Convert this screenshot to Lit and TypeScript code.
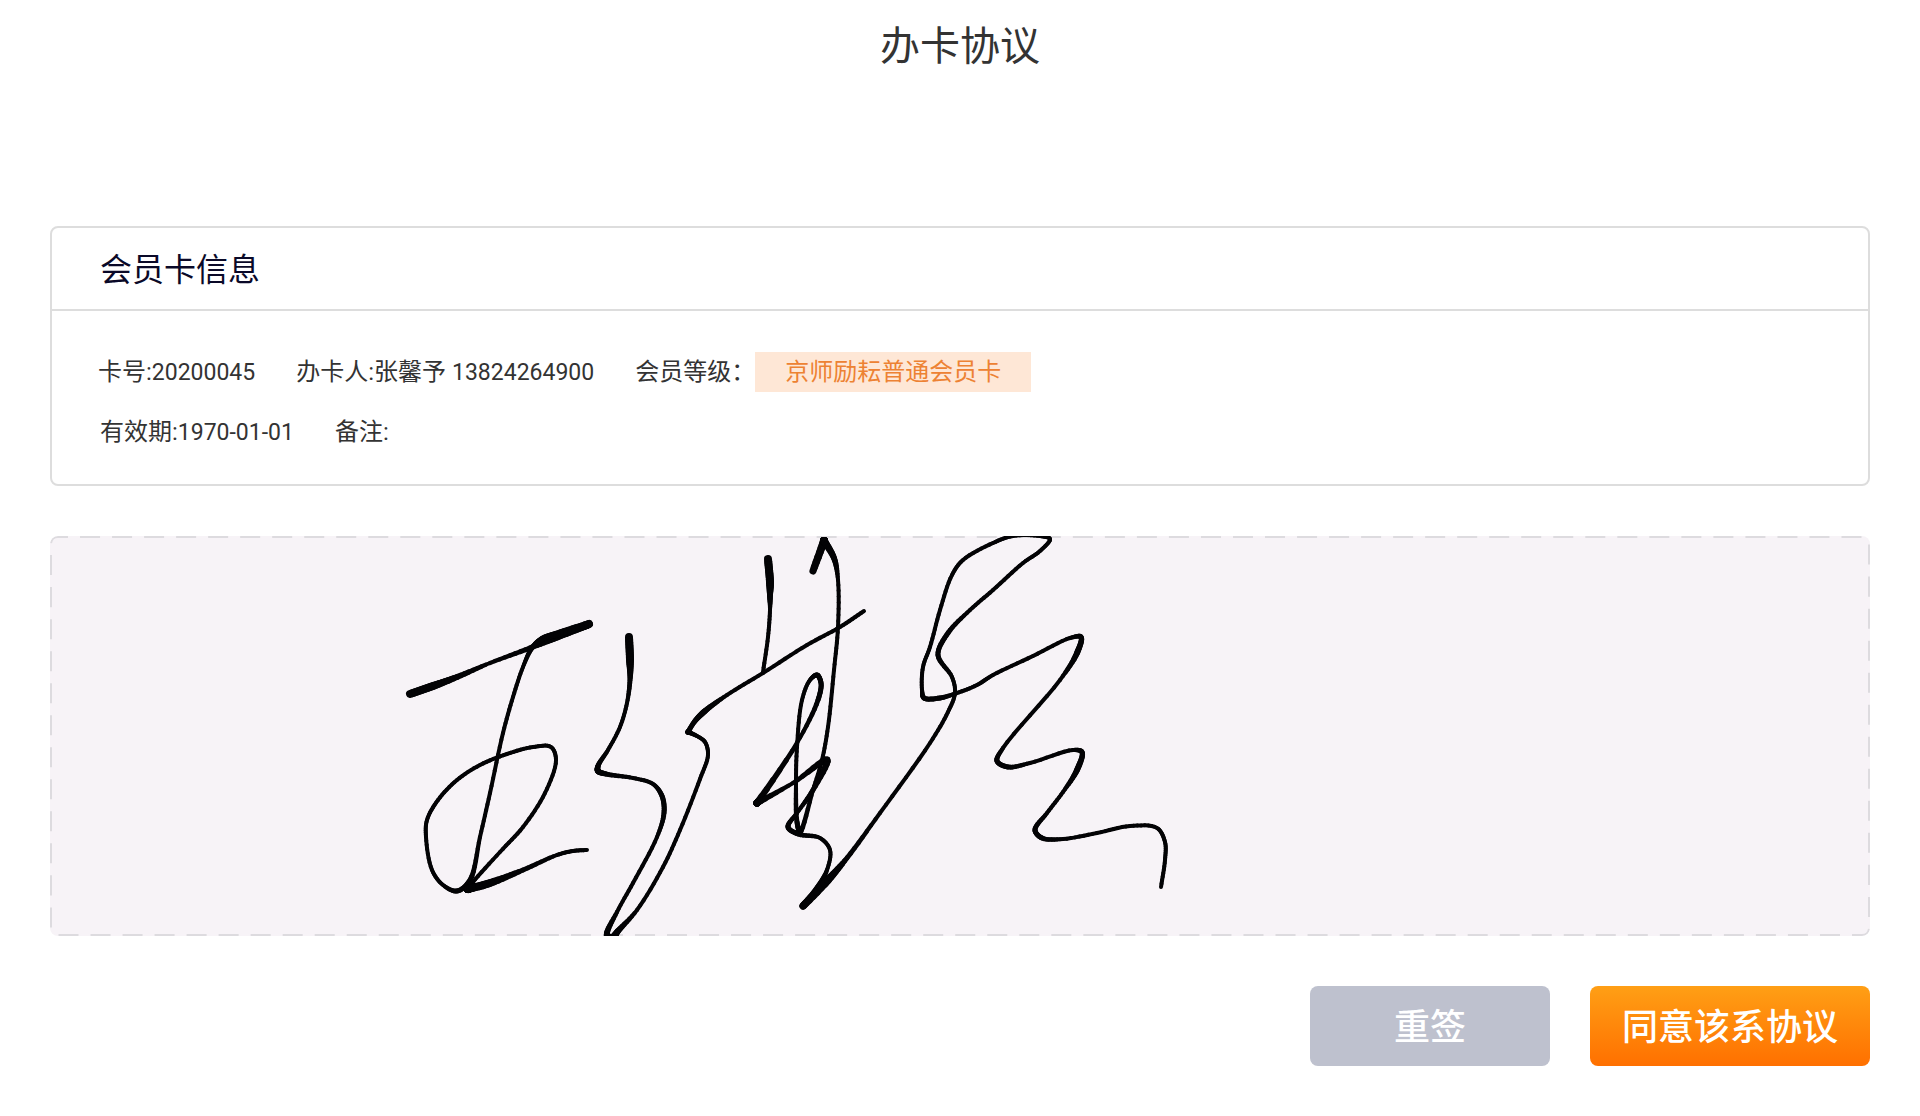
import { LitElement, html, css, svg } from "lit";
import { customElement } from "lit/decorators.js";

type InkPoint = [x: number, y: number, width: number];

/* Pen samples: x, y and nib width. A repeated sample makes a sharp turn. */
const STROKES: InkPoint[][] = [
  [
    [410, 694, 8], [433, 686, 8], [457, 677, 6], [490, 663, 4], [530, 648, 5],
    [557, 637, 7], [580, 628, 7], [589, 624, 8],
  ],
  [
    [589, 624, 8], [557, 634, 7], [542, 639, 6], [532, 648, 5], [523, 667, 4],
    [513, 697, 4], [503, 733, 4], [490, 793, 4], [480, 837, 4], [470, 880, 5],
    [457, 891, 5], [443, 885, 4], [432, 870, 4], [426, 837, 4], [427, 820, 4],
    [438, 800, 4], [457, 780, 4], [480, 765, 4], [507, 754, 4], [533, 747, 4],
    [551, 747, 4], [556, 760, 4], [545, 793, 4], [523, 827, 4], [500, 852, 4],
    [473, 882, 4], [468, 889, 8], [468, 889, 8], [490, 883, 8], [523, 870, 5],
    [557, 855, 4], [573, 851, 4], [587, 850, 4],
  ],
  [
    [629, 637, 8], [630, 660, 8], [630, 680, 5], [627, 703, 4], [620, 727, 4],
    [608, 750, 4], [598, 766, 5], [598, 771, 6], [606, 774, 5], [633, 778, 4],
    [653, 784, 4], [662, 796, 5], [664, 813, 5], [657, 837, 4], [633, 883, 4],
    [617, 912, 4], [607, 935, 6], [612, 938, 8], [618, 931, 6], [637, 910, 4],
    [663, 867, 4], [680, 830, 4], [700, 779, 4], [708, 755, 4], [705, 742, 4],
    [697, 736, 4], [688, 732, 5], [688, 732, 5], [695, 721, 5], [705, 711, 6],
    [727, 695, 4], [763, 673, 4], [807, 645, 4], [840, 627, 4], [864, 611, 4],
  ],
  [
    [768, 559, 8], [770, 582, 8], [770, 595, 6], [770, 610, 4], [768, 637, 4],
    [763, 672, 4],
  ],
  [
    [813, 571, 7], [824, 541, 8], [824, 541, 8], [834, 558, 6], [838, 580, 4],
    [838, 627, 4], [834, 670, 4], [828, 727, 4], [822, 760, 4], [813, 790, 4],
    [800, 832, 5], [797, 822, 5], [796, 783, 4], [797, 747, 4], [802, 700, 4],
    [810, 680, 4], [817, 675, 5], [821, 683, 5], [818, 700, 5], [797, 743, 4],
    [757, 803, 7], [757, 803, 7], [793, 783, 4], [827, 760, 7], [813, 790, 5],
    [797, 813, 4], [788, 827, 5], [798, 834, 5], [820, 838, 4], [830, 850, 4],
    [827, 870, 4], [816, 890, 6], [803, 906, 7], [828, 880, 8], [847, 858, 5],
    [880, 813, 4], [930, 743, 4], [948, 712, 4], [955, 693, 4], [952, 677, 4],
    [938, 655, 5], [948, 633, 5], [970, 610, 4], [993, 590, 4], [1023, 563, 4],
    [1040, 551, 4], [1050, 539, 4], [1040, 536, 4], [1013, 536, 4],
    [993, 543, 4], [963, 560, 4], [952, 575, 4], [940, 610, 4], [930, 647, 4],
    [923, 667, 4], [922, 690, 4], [924, 698, 5], [940, 698, 5], [957, 693, 4],
    [977, 685, 4], [993, 675, 4], [1033, 656, 4], [1070, 638, 4],
    [1081, 637, 5], [1077, 653, 6], [1060, 680, 4], [1003, 748, 4],
    [997, 761, 5], [1008, 767, 5], [1030, 763, 4], [1073, 750, 4],
    [1082, 752, 5], [1077, 770, 6], [1063, 792, 4], [1047, 813, 4],
    [1035, 830, 5], [1042, 838, 5], [1063, 839, 4], [1097, 833, 4],
    [1130, 826, 4], [1157, 828, 4], [1165, 842, 4], [1165, 860, 4],
    [1161, 887, 4],
  ],
];

/* Centripetal spline through the samples, cut into short pieces. */
function smooth(points: InkPoint[]): InkPoint[] {
  const out: InkPoint[] = [points[0]];
  const steps = 8;
  const gap = (a: InkPoint, b: InkPoint) =>
    Math.max(Math.sqrt(Math.hypot(b[0] - a[0], b[1] - a[1])), 0.01);
  for (let i = 0; i < points.length - 1; i++) {
    const p1 = points[i];
    const p2 = points[i + 1];
    const p0 = points[i - 1] ?? p1;
    const p3 = points[i + 2] ?? p2;
    const d0 = gap(p0, p1);
    const d1 = gap(p1, p2);
    const d2 = gap(p2, p3);
    const tangents = (k: 0 | 1) => {
      const inner = (p2[k] - p1[k]) / d1;
      const m1 =
        p0 === p1
          ? inner
          : (p1[k] - p0[k]) / d0 - (p2[k] - p0[k]) / (d0 + d1) + inner;
      const m2 =
        p3 === p2
          ? inner
          : inner - (p3[k] - p1[k]) / (d1 + d2) + (p3[k] - p2[k]) / d2;
      return [m1 * d1, m2 * d1];
    };
    const tx = tangents(0);
    const ty = tangents(1);
    for (let s = 1; s <= steps; s++) {
      const t = s / steps;
      const a = 2 * t ** 3 - 3 * t ** 2 + 1;
      const b = t ** 3 - 2 * t ** 2 + t;
      const c = -2 * t ** 3 + 3 * t ** 2;
      const d = t ** 3 - t ** 2;
      out.push([
        a * p1[0] + b * tx[0] + c * p2[0] + d * tx[1],
        a * p1[1] + b * ty[0] + c * p2[1] + d * ty[1],
        p1[2] + (p2[2] - p1[2]) * t,
      ]);
    }
  }
  return out;
}

@customElement("signature-pad")
export class SignaturePad extends LitElement {
  static styles = css`
    :host {
      display: grid;
      overflow: hidden;
      border-radius: 8px;
      background: #f7f3f7;
    }
    .frame,
    .ink {
      grid-area: 1 / 1;
      display: block;
      width: 100%;
    }
    .frame {
      height: 100%;
    }
    .outline {
      x: 1px;
      y: 1px;
      width: calc(100% - 2px);
      height: calc(100% - 2px);
      rx: 7px;
      fill: none;
      stroke: #dddbdf;
      stroke-width: 2px;
      stroke-dasharray: 20 12;
      stroke-dashoffset: 10px;
    }
    .ink {
      stroke: #030305;
      stroke-linecap: round;
    }
  `;

  render() {
    return html`
      <svg class="frame" aria-hidden="true">
        <rect class="outline" pathLength="4416"></rect>
      </svg>
      <svg class="ink" viewBox="50 536 1820 400" role="img" aria-label="签名">
        ${STROKES.map((stroke) => {
          const pts = smooth(stroke);
          return pts.slice(1).map(
            (p, i) => svg`<line
              x1=${pts[i][0].toFixed(2)} y1=${pts[i][1].toFixed(2)}
              x2=${p[0].toFixed(2)} y2=${p[1].toFixed(2)}
              stroke-width=${p[2].toFixed(2)}></line>`
          );
        })}
      </svg>
    `;
  }
}

@customElement("app-root")
export class AppRoot extends LitElement {
  static styles = css`
    :host {
      display: block;
      min-height: 100vh;
      box-sizing: border-box;
      padding: 17px 50px 50px;
      background: #fff;
      color: #333;
      font-family: Roboto, "Noto Sans CJK SC", sans-serif;
      font-size: 24px;
      line-height: 40px;
    }
    .title {
      margin: 0 0 149px;
      font-size: 40px;
      line-height: 60px;
      font-weight: 400;
      text-align: center;
    }
    .card {
      border: 2px solid #ddd;
      border-radius: 8px;
    }
    .card-title {
      margin: 0;
      padding: 22px 48px 19px;
      border-bottom: 2px solid #ddd;
      color: #0a0928;
      font-size: 32px;
      line-height: 40px;
      font-weight: 400;
    }
    .details {
      display: flex;
      flex-direction: column;
      gap: 20px;
      padding: 41px 46px 32px;
    }
    .row {
      display: flex;
      flex-wrap: wrap;
      gap: 0 41px;
    }
    .row + .row {
      padding-left: 2px;
    }
    .number {
      font-size: 23px;
      line-height: 1;
    }
    .level {
      display: flex;
    }
    .tag {
      padding: 0 30px;
      background: #fee7d6;
      color: #ed8233;
    }
    .pad {
      margin-top: 50px;
    }
    .actions {
      display: flex;
      justify-content: flex-end;
      gap: 40px;
      margin-top: 50px;
    }
    .button {
      min-width: 240px;
      padding: 12px 32px 8px;
      border: 0;
      border-radius: 8px;
      background: #bec1ce;
      color: #fff;
      font: inherit;
      font-size: 36px;
      line-height: 60px;
      font-weight: 500;
      cursor: pointer;
    }
    .primary {
      background: linear-gradient(#ff9f15, #ff7000);
    }
  `;

  render() {
    return html`
      <main>
        <h1 class="title">办卡协议</h1>
        <section class="card">
          <h2 class="card-title">会员卡信息</h2>
          <div class="details">
            <div class="row">
              <span>卡号:<span class="number">20200045</span></span>
              <span>办卡人:张馨予 <span class="number">13824264900</span></span>
              <span class="level">会员等级：<span class="tag">京师励耘普通会员卡</span></span>
            </div>
            <div class="row">
              <span>有效期:<span class="number">1970-01-01</span></span>
              <span>备注:</span>
            </div>
          </div>
        </section>
        <signature-pad class="pad"></signature-pad>
        <div class="actions">
          <button class="button" type="button">重签</button>
          <button class="button primary" type="button">同意该系协议</button>
        </div>
      </main>
    `;
  }
}
